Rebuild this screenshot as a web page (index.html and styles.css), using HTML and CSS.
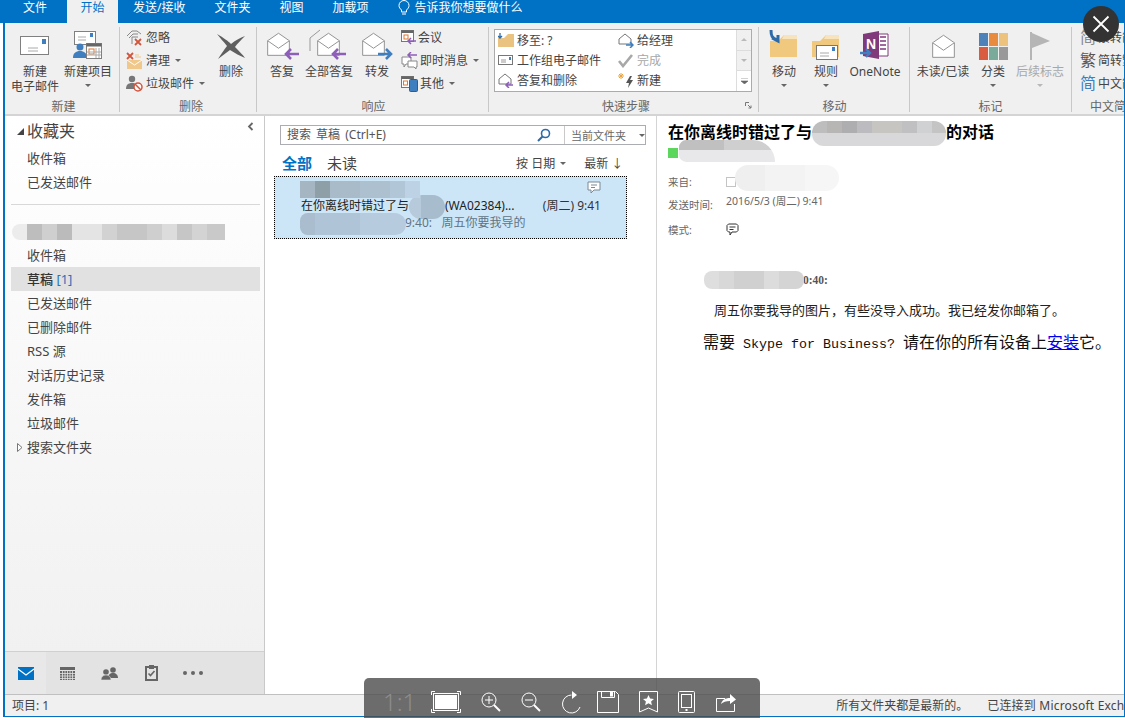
FILE: index.html
```html
<!DOCTYPE html>
<html lang="zh-CN">
<head>
<meta charset="utf-8">
<title>Outlook</title>
<link rel="stylesheet" href="styles.css">
</head>
<body>
<svg class="defs" width="0" height="0">
  <defs>
    <symbol id="open" viewBox="0 0 30 30"><path d="M2 10.5 15 1.5 28 10.5V28H2Z" fill="#fff" stroke="#808080"/><path d="M2 10.5 15 19.5 28 10.5" fill="#fff" stroke="#808080"/></symbol>
    <symbol id="arrowL" viewBox="0 0 16 12"><path d="M16 6H4M8 1 3 6l5 5" fill="none" stroke="#8d5fb8" stroke-width="2.6"/></symbol>
    <symbol id="arrowR" viewBox="0 0 16 12"><path d="M0 6h12M8 1l5 5-5 5" fill="none" stroke="#3f7fbf" stroke-width="2.6"/></symbol>
    <symbol id="caret" viewBox="0 0 6 3"><path d="M0 0h6L3 3Z" fill="#666"/></symbol>
    <symbol id="folder" viewBox="0 0 28 24"><path d="M0 7 8 7 14 1H27V23H0Z" fill="#f0c97f"/><path d="M14 1h13v4H12Z" fill="#f7e4bc"/></symbol>
  </defs>
</svg>

<header class="tabs">
  <span class="tab t-file">文件</span>
  <span class="tab tab-on">开始</span>
  <span class="tab t-send">发送/接收</span>
  <span class="tab t-folder">文件夹</span>
  <span class="tab t-view">视图</span>
  <span class="tab t-addin">加载项</span>
  <svg class="bulb" width="12" height="16" viewBox="0 0 12 16"><path d="M3.5 10C2 8.500 1 7.500 1 5.500a5 5 0 0 1 10 0c0 2-1 3-2.500 4.500v2h-5ZM4 14h4" fill="none" stroke="#fff"/></svg>
  <span class="tab t-tell">告诉我你想要做什么</span>
</header>

<div class="frame">
  <section class="ribbon">
    <div class="group g1">
      <div class="gbody">
        <div class="big b-new">
          <span class="bigicon"><svg width="30" height="20" viewBox="0 0 30 20"><rect x=".5" y=".5" width="28" height="18" fill="#fff" stroke="#808080"/><rect x="22" y="3" width="4" height="5" fill="#3f7fbf"/><path d="M8 12h10M8 15h10" stroke="#aaa"/></svg></span>
          <span>新建</span><span>电子邮件</span>
        </div>
        <div class="big b-item">
          <span class="bigicon"><svg width="30" height="30" viewBox="0 0 30 30"><rect x="1.500" y=".5" width="21" height="13" fill="#fff" stroke="#808080"/><rect x="17" y="2" width="3" height="4" fill="#3f7fbf"/><path d="M5 6h8M5 9h8" stroke="#aaa"/><circle cx="7" cy="16" r="3.500" fill="#3f7fbf"/><path d="M0 27c0-5 3-7 7-7s7 2 7 7Z" fill="#3f7fbf"/><rect x="13.500" y="12.500" width="15" height="15" fill="#fff" stroke="#808080"/><rect x="13.500" y="12.500" width="15" height="3" fill="#666"/><rect x="16" y="18" width="5" height="5" fill="#fff" stroke="#e0792f"/><path d="M23 17v10M26 17v10M14 21h14M14 24h14" stroke="#aaa"/></svg></span>
          <span>新建项目</span>
          <svg class="caret" width="6" height="3"><use href="#caret"/></svg>
        </div>
      </div>
      <div class="glabel">新建</div>
    </div>

    <div class="group g2">
      <div class="gbody">
        <div class="smallcol c-del">
          <div class="small"><svg width="17" height="17" viewBox="0 0 17 17"><path d="M1 7 6 2h5l4 3M3 9l4-4h5M6 15V8h6" fill="none" stroke="#888"/><path d="M9 10l6 6M15 10l-6 6" stroke="#d2553c" stroke-width="1.800"/></svg><span>忽略</span></div>
          <div class="small"><svg width="17" height="17" viewBox="0 0 17 17"><rect x="1" y="8" width="15" height="9" fill="#efc88a"/><path d="M1 8l7.500 5L16 8" fill="none" stroke="#fff"/><path d="M1 1l6 6M7 1 1 7" stroke="#d2553c" stroke-width="1.800"/><path d="M9 5h6M9 3h4" stroke="#efc88a"/></svg><span>清理</span><svg class="caret-s" width="6" height="3"><use href="#caret"/></svg></div>
          <div class="small"><svg width="17" height="17" viewBox="0 0 17 17"><circle cx="6" cy="4" r="3.200" fill="#777"/><path d="M0 14c0-4 2-6 6-6s5 2 5 3v3Z" fill="#777"/><circle cx="12" cy="12" r="4" fill="#fff" stroke="#d2553c" stroke-width="1.500"/><path d="M9 9l6 6" stroke="#d2553c" stroke-width="1.500"/></svg><span>垃圾邮件</span><svg class="caret-s" width="6" height="3"><use href="#caret"/></svg></div>
        </div>
        <div class="big b-del">
          <span class="bigicon"><svg width="30" height="28" viewBox="0 0 30 28"><path d="M1 2C8 6 12 9 15 12 20 8 24 6 29 4 25 8 21 12 19 15 23 19 27 23 29 26 24 24 19 21 14 18 10 21 6 24 2 27 5 22 8 18 11 14 7 9 4 6 1 2Z" fill="#5f5f5f"/></svg></span>
          <span>删除</span>
        </div>
      </div>
      <div class="glabel">删除</div>
    </div>

    <div class="group g3">
      <div class="gbody">
        <div class="big b-reply">
          <span class="bigicon mail"><svg class="mailsvg" width="27" height="25"><use href="#open"/></svg><svg class="arrow" width="16" height="12"><use href="#arrowL"/></svg></span>
          <span>答复</span>
        </div>
        <div class="big b-all">
          <span class="bigicon mail"><svg class="backsvg" width="28" height="25" viewBox="0 0 28 25"><path d="M1 22V9L11 1" fill="none" stroke="#999"/></svg><svg class="mailsvg" width="27" height="25"><use href="#open"/></svg><svg class="arrow" width="16" height="12"><use href="#arrowL"/></svg></span>
          <span>全部答复</span>
        </div>
        <div class="big b-fwd">
          <span class="bigicon mail"><svg class="mailsvg" width="27" height="25"><use href="#open"/></svg><svg class="arrow" width="16" height="12"><use href="#arrowR"/></svg></span>
          <span>转发</span>
        </div>
        <div class="smallcol c-resp">
          <div class="small"><svg width="15" height="15" viewBox="0 0 15 15"><rect x=".5" y=".5" width="12" height="11" fill="#fff" stroke="#777"/><rect x=".5" y=".5" width="12" height="2.500" fill="#666"/><rect x="3" y="5" width="4" height="4" fill="#fff" stroke="#e0792f"/><path d="M15 11H8M10 8l-3 3 3 3" fill="none" stroke="#8d5fb8" stroke-width="1.500"/></svg><span>会议</span></div>
          <div class="small"><svg width="17" height="17" viewBox="0 0 17 17"><path d="M1 5h9v7H5l-2 3v-3H1Z" fill="#fff" stroke="#888"/><path d="M7 9h9v6h-1v2l-2-2H7Z" fill="#fff" stroke="#888"/><path d="M16 3H8M10 0 7 3l3 3" fill="none" stroke="#8d5fb8" stroke-width="1.500"/></svg><span>即时消息</span><svg class="caret-s" width="6" height="3"><use href="#caret"/></svg></div>
          <div class="small"><svg width="17" height="17" viewBox="0 0 17 17"><rect x=".5" y="1.500" width="12" height="11" fill="#fff" stroke="#777"/><rect x=".5" y="1.500" width="12" height="2.500" fill="#666"/><rect x="2.500" y="6" width="4" height="4" fill="#fff" stroke="#e0792f"/><rect x="8.500" y="4.500" width="8" height="12" rx="1" fill="#3f7fbf" stroke="#555"/></svg><span>其他</span><svg class="caret-s" width="6" height="3"><use href="#caret"/></svg></div>
        </div>
      </div>
      <div class="glabel">响应</div>
    </div>

    <div class="group g4">
      <div class="gbody">
        <div class="gallery">
          <div class="galgrid">
            <div class="gitem"><svg width="16" height="15" viewBox="0 0 16 15"><path d="M0 5h6l4-4h6v13H0Z" fill="#e9c37f"/><path d="M2 0v4M0 3l2 2 2-2" fill="none" stroke="#2d6ba8" stroke-width="1.300"/></svg><span>移至: ?</span></div>
            <div class="gitem"><svg width="16" height="15" viewBox="0 0 16 15"><path d="M1 6 7 1l6 5v5H1Z" fill="#fff" stroke="#777"/><path d="M8 12h7M12 9l3 3-3 3" fill="none" stroke="#3f7fbf" stroke-width="1.500"/></svg><span>给经理</span></div>
            <div class="gitem"><svg width="16" height="15" viewBox="0 0 16 15"><rect x=".5" y="2.500" width="14" height="9" fill="#fff" stroke="#777"/><rect x="11" y="4" width="2" height="3" fill="#3f7fbf"/><path d="M3 7h5M3 9h5" stroke="#999"/></svg><span>工作组电子邮件</span></div>
            <div class="gitem muted"><svg width="16" height="15" viewBox="0 0 16 15"><path d="M1 8l4 5L14 2" fill="none" stroke="#a8a8a8" stroke-width="2.600"/></svg><span>完成</span></div>
            <div class="gitem"><svg width="16" height="15" viewBox="0 0 16 15"><path d="M1 6 7 1l6 5v5H1Z" fill="#fff" stroke="#777"/><path d="M15 12H8M11 9l-3 3 3 3" fill="none" stroke="#8d5fb8" stroke-width="1.500"/></svg><span>答复和删除</span></div>
            <div class="gitem"><svg width="16" height="15" viewBox="0 0 16 15"><path d="M3 0v6M0 3h6M1 1l4 4M5 1 1 5" stroke="#e8a33d"/><path d="M12 3 8 10h3l-1 5 5-8h-3l2-4Z" fill="#555"/></svg><span>新建</span></div>
          </div>
          <div class="galscroll">
            <span class="sb"><svg width="6" height="3"><path d="M0 3h6L3 0Z" fill="#bbb"/></svg></span>
            <span class="sb"><svg width="6" height="3"><use href="#caret" opacity=".4"/></svg></span>
            <span class="sb sb-w"><svg width="7" height="6"><path d="M0 0h7M0 3h7L3.500 6Z" stroke="#666" stroke-width=".6" fill="#666"/></svg></span>
          </div>
        </div>
      </div>
      <div class="glabel">快速步骤</div>
      <svg class="launcher" width="7" height="7" viewBox="0 0 7 7"><path d="M.5 4V.5H4M3 3l3 3M6 3.500V6H3.500" fill="none" stroke="#777"/></svg>
    </div>

    <div class="group g5">
      <div class="gbody">
        <div class="big b-move">
          <span class="bigicon fold"><svg width="28" height="24"><use href="#folder"/></svg><svg class="bluearrow" width="13" height="17" viewBox="0 0 13 17"><path d="M3 1c0 6 1 8 6 10M4 9l6 3 0-6" fill="none" stroke="#2d6ba8" stroke-width="3"/></svg></span>
          <span>移动</span>
          <svg class="caret" width="6" height="3"><use href="#caret"/></svg>
        </div>
        <div class="big b-rule">
          <span class="bigicon fold"><svg width="28" height="24"><use href="#folder"/></svg><svg class="envover" width="22" height="15" viewBox="0 0 22 15"><rect x=".5" y=".5" width="21" height="14" fill="#fff" stroke="#777"/><rect x="16" y="2" width="3" height="4" fill="#3f7fbf"/><path d="M4 8h9M4 11h9" stroke="#aaa"/></svg></span>
          <span>规则</span>
          <svg class="caret" width="6" height="3"><use href="#caret"/></svg>
        </div>
        <div class="big b-one">
          <span class="bigicon"><svg width="30" height="30" viewBox="0 0 30 30"><path d="M18 3h10v22H18Z" fill="#fff" stroke="#80397b"/><path d="M20 6h6M20 10h6M20 14h6M20 18h6" stroke="#80397b" stroke-width="1.500"/><path d="M3 3 19 0V28L3 25Z" fill="#80397b"/><text x="6" y="18" class="onenote-n">N</text><path d="M0 22h9M6 18l4 4-4 4" fill="none" stroke="#3f7fbf" stroke-width="2.400"/></svg></span>
          <span>OneNote</span>
        </div>
      </div>
      <div class="glabel">移动</div>
    </div>

    <div class="group g6">
      <div class="gbody">
        <div class="big b-read">
          <span class="bigicon"><svg width="27" height="25"><use href="#open"/></svg></span>
          <span>未读/已读</span>
        </div>
        <div class="big b-cat">
          <span class="bigicon"><span class="swatch"><i class="s1"></i><i class="s2"></i><i class="s3"></i><i class="s4"></i><i class="s5"></i><i class="s6"></i></span></span>
          <span>分类</span>
          <svg class="caret" width="6" height="3"><use href="#caret"/></svg>
        </div>
        <div class="big b-flag muted">
          <span class="bigicon"><svg width="22" height="30" viewBox="0 0 22 30"><path d="M2 1v28" stroke="#b5b5b5" stroke-width="2"/><path d="M3 2 21 10 3 17Z" fill="#b5b5b5"/></svg></span>
          <span>后续标志</span>
          <svg class="caret caret-faint" width="6" height="3"><use href="#caret"/></svg>
        </div>
      </div>
      <div class="glabel">标记</div>
    </div>

    <div class="group g7">
      <div class="gbody">
        <div class="smallcol c-zh">
          <div class="small"><span class="zh-i">简</span><span>繁转简</span></div>
          <div class="small"><span class="zh-i dark">繁</span><span>简转繁</span></div>
          <div class="small"><span class="zh-i blue">简</span><span>中文简繁转换</span></div>
        </div>
      </div>
      <div class="glabel g7label">中文简繁转换</div>
    </div>
  </section>

  <main class="main">
    <nav class="nav">
      <div class="navscroll">
        <div class="favhead"><svg class="tri" width="7" height="7"><path d="M7 0V7H0Z" fill="#444"/></svg><span>收藏夹</span><svg class="collapse" width="7" height="9" viewBox="0 0 7 9"><path d="M5.500 1 2 4.500 5.500 8" fill="none" stroke="#666" stroke-width="1.800"/></svg></div>
        <div class="navitem">收件箱</div>
        <div class="navitem">已发送邮件</div>
        <div class="navdiv"></div>
        <div class="accrow"><span class="blur b-acc"></span></div>
        <div class="navitem">收件箱</div>
        <div class="navitem on"><b>草稿</b> <span class="count">[1]</span></div>
        <div class="navitem">已发送邮件</div>
        <div class="navitem">已删除邮件</div>
        <div class="navitem">RSS 源</div>
        <div class="navitem">对话历史记录</div>
        <div class="navitem">发件箱</div>
        <div class="navitem">垃圾邮件</div>
        <div class="navitem expand"><svg class="tri2" width="6" height="9"><path d="M.5.5 5 4.500.5 8.500Z" fill="#fff" stroke="#777"/></svg>搜索文件夹</div>
      </div>
      <div class="modes">
        <span class="mode mode-on"><svg width="16" height="13" viewBox="0 0 16 13"><rect width="16" height="13" fill="#0072c6"/><path d="M0 2l8 6 8-6" fill="none" stroke="#fff" stroke-width="1.200"/></svg></span>
        <span class="mode"><svg width="15" height="13" viewBox="0 0 15 13"><rect width="15" height="3" fill="#666"/><path d="M0 4h15v9H0Z" fill="#666"/><path d="M0 6.500h15M0 9h15M0 11.500h15M2.500 4v9M5 4v9M7.500 4v9M10 4v9M12.500 4v9" stroke="#e3e3e3" stroke-width=".8"/></svg></span>
        <span class="mode"><svg width="17" height="13" viewBox="0 0 17 13"><circle cx="12" cy="3" r="2.800" fill="#666"/><path d="M7 11c0-3 2-5 5-5s5 2 5 5Z" fill="#666"/><circle cx="5" cy="5" r="2.800" fill="#666"/><path d="M0 13c0-3 2-5 5-5s5 2 5 5Z" fill="#666" stroke="#e3e3e3" stroke-width=".6"/></svg></span>
        <span class="mode"><svg width="13" height="16" viewBox="0 0 13 16"><path d="M1 2h11v13H1Z" fill="none" stroke="#666" stroke-width="2"/><rect x="4" y="0" width="5" height="4" fill="#666"/><path d="M3.500 8.500l2 2 4-4.500" fill="none" stroke="#666" stroke-width="1.600"/></svg></span>
        <span class="mode dots"><i></i><i></i><i></i></span>
      </div>
    </nav>

    <section class="list">
      <div class="search">
        <span class="stext">搜索 草稿 (Ctrl+E)</span>
        <svg class="mag" width="14" height="14" viewBox="0 0 14 14"><circle cx="8.500" cy="5.500" r="4" fill="none" stroke="#2d6ba8" stroke-width="1.600"/><path d="M5.500 8.500 1 13" stroke="#2d6ba8" stroke-width="2"/></svg>
        <span class="scope">当前文件夹<svg width="6" height="3"><use href="#caret"/></svg></span>
      </div>
      <div class="filters">
        <span class="f-all">全部</span><span class="f-unread">未读</span>
        <span class="f-by">按 日期<svg width="6" height="3"><use href="#caret"/></svg></span>
        <span class="f-new">最新 ↓</span>
      </div>
      <article class="msg">
        <div class="msgtop"><span class="blur b-from"></span><svg width="14" height="13" viewBox="0 0 14 13"><path d="M1 1h12v8H7l-3 3V9H1Z" fill="#fff" stroke="#7a8a96"/><path d="M4 4h6M4 6.500h4" stroke="#7a8a96"/></svg></div>
        <div class="msgmid"><span class="subject">在你离线时错过了与<span class="blur b-subj"></span>(WA02384)...</span><span>(周二) 9:41</span></div>
        <div class="msgbot"><span class="blur b-prev"></span><span class="prev">9:40: &nbsp;&nbsp;周五你要我导的</span></div>
      </article>
    </section>

    <section class="read">
      <h1 class="rtitle">在你离线时错过了与<span class="blur b-title"></span>的对话</h1>
      <div class="presence"><i class="dot"></i><span class="blur b-pres"></span></div>
      <div class="meta"><span class="mk">来自:</span><span class="mv"><i class="check"></i><span class="blur b-sender"></span></span></div>
      <div class="meta meta-date"><span class="mk">发送时间:</span><span class="mv date">2016/5/3 (周二) 9:41</span></div>
      <div class="meta meta-mode"><span class="mk">模式:</span><span class="mv"><svg width="13" height="13" viewBox="0 0 13 13"><path d="M1 2.500 2.500 1h8L12 2.500v5L10.500 9H6L4 12V9H2.500L1 7.500Z" fill="#fff" stroke="#333"/><path d="M3.500 4h6M3.500 6.500h4" stroke="#333"/></svg></span></div>
      <div class="bodyhead"><span class="blur b-body"></span><b>0:40:</b></div>
      <p class="bodytext">周五你要我导的图片，有些没导入成功。我已经发你邮箱了。</p>
      <p class="skype">需要<span class="mono"> Skype for Business? </span>请在你的所有设备上<a href="#">安装</a>它。</p>
    </section>
  </main>

  <footer class="status">
    <span>项目: 1</span>
    <span class="st-right">所有文件夹都是最新的。</span>
    <span class="st-conn">已连接到 Microsoft Exchange</span>
  </footer>
</div>

<button class="close" aria-label="关闭"><svg width="18" height="18" viewBox="0 0 18 18"><path d="M1.500 1.500l15 15M16.500 1.500l-15 15" stroke="#fff" stroke-width="1.800"/></svg></button>

<div class="viewer">
  <span class="ratio">1:1</span>
  <svg width="30" height="22" viewBox="0 0 30 22"><path d="M.5 4V.5H4M26 .5h3.500V4M.5 18v3.500H4M26 21.500h3.500V18" fill="none" stroke="#fff"/><rect x="3.500" y="3.500" width="23" height="15" fill="#fff" stroke="#6d6d6d"/><rect x="2.500" y="2.500" width="25" height="17" fill="none" stroke="#fff"/></svg>
  <svg width="20" height="21" viewBox="0 0 20 21"><circle cx="8" cy="8" r="7" fill="none" stroke="#fff"/><path d="M4 8h8M8 4v8" stroke="#fff"/><path d="M13 13l6 6" stroke="#fff" stroke-width="2"/></svg>
  <svg width="20" height="21" viewBox="0 0 20 21"><circle cx="8" cy="8" r="7" fill="none" stroke="#fff"/><path d="M4 8h8" stroke="#fff"/><path d="M13 13l6 6" stroke="#fff" stroke-width="2"/></svg>
  <svg width="20" height="23" viewBox="0 0 20 23"><path d="M10.500 4A9 9 0 1 0 19 16" fill="none" stroke="#fff"/><path d="M11 0l5 4-5 4Z" fill="#fff"/></svg>
  <svg class="v-save" width="22" height="22" viewBox="0 0 22 22"><path d="M.5.5h18l3 3v18H.5Z" fill="none" stroke="#fff"/><path d="M4.500.5v6h13v-6" fill="none" stroke="#fff"/><rect x="13" y="1" width="3" height="4.500" fill="#fff"/></svg>
  <svg width="19" height="22" viewBox="0 0 19 22"><path d="M.5.5h18v20.500l-9-4-9 4Z" fill="none" stroke="#fff"/><path d="M9.500 4l1.600 3.500 3.900.4-2.900 2.500.8 3.800-3.400-2-3.400 2 .8-3.800L4 7.900l3.900-.4Z" fill="#fff"/></svg>
  <svg width="17" height="22" viewBox="0 0 17 22"><rect x=".5" y=".5" width="16" height="21" rx="1" fill="none" stroke="#fff"/><rect x="3.500" y="3.500" width="10" height="13" fill="none" stroke="#fff"/><rect x="7.500" y="18" width="2" height="2" fill="#fff"/></svg>
  <svg class="v-share" width="20" height="19" viewBox="0 0 20 19"><path d="M9 5.500H.5v13h18V11" fill="none" stroke="#fff"/><path d="M5 11c1-4 4-6 9-6V1l6 5.500L14 11V8c-4 0-7 1-9 3Z" fill="#fff"/></svg>
</div>
</body>
</html>
```
FILE: styles.css
```css
* { box-sizing: border-box; }
html, body { margin: 0; height: 100%; overflow: hidden; }
body {
  width: 1125px;
  height: 718px;
  background: #fff;
  position: relative;
  font: 12px/15px "Noto Sans", "Noto Sans CJK SC", sans-serif;
  color: #444;
}
.defs { position: absolute; }

.tabs {
  height: 23px;
  background: #0072c6;
  display: flex;
  color: #fff;
  font-size: 12px;
  line-height: 15px;
  padding-left: 23px;
}
.tab { white-space: nowrap; }
.tab-on {
  margin-left: 20px;
  width: 51px;
  background: #f0f0f0;
  color: #0072c6;
  text-align: center;
}
.t-send { margin-left: 15px; }
.t-folder { margin-left: 29px; }
.t-view { margin-left: 29px; }
.t-addin { margin-left: 29px; }
.bulb { margin-left: 29px; }
.t-tell { margin-left: 5px; }

.frame {
  margin-left: 3px;
  height: 694px;
  border-left: 2px solid #0072c6;
  border-right: 1px solid #0072c6;
  border-bottom: 1px solid #0072c6;
  display: flex;
  flex-direction: column;
}

.ribbon {
  height: 93px;
  flex: none;
  background: #f0f0f0;
  border-bottom: 2px solid #d4d4d4;
  padding-top: 4px;
  display: flex;
  overflow: hidden;
}
.group {
  position: relative;
  height: 85px;
  border-right: 1px solid #c8c8c8;
  display: flex;
  flex-direction: column;
  flex: none;
}
.gbody { flex: 1; display: flex; min-height: 0; }
.glabel { height: 15px; text-align: center; color: #666; line-height: 15px; margin-bottom: -2px; }
.g1 { width: 115px; padding-left: 3px; }
.g2 { width: 137px; padding-left: 6px; }
.g3 { width: 232px; padding-left: 2px; }
.g4 { width: 270px; padding-left: 5px; }
.g5 { width: 151px; padding-left: 1px; }
.g6 { width: 162px; }
.g7 { width: 60px; border-right: 0; white-space: nowrap; }
.g7label { text-align: left; padding-left: 18px; }

.big {
  display: flex;
  flex-direction: column;
  align-items: center;
  color: #444;
  white-space: nowrap;
  flex: none;
  padding-top: 1px;
}
.muted, .muted span { color: #a8a8a8; }
.bigicon {
  height: 36px;
  display: flex;
  align-items: center;
  justify-content: center;
  position: relative;
  flex: none;
}
.caret { margin-top: 5px; }
.caret-faint { opacity: .4; }
.caret-s { margin-left: 5px; }
.b-new { width: 54px; }
.b-item { width: 52px; }
.b-del { width: 50px; margin-left: 1px; }
.b-reply { width: 46px; }
.b-all { width: 48px; }
.b-fwd { width: 48px; }
.b-move { width: 48px; }
.b-rule { width: 36px; }
.b-one { width: 60px; margin-left: 1px; }
.b-read { width: 64px; margin-left: 1px; }
.b-cat { width: 36px; }
.b-flag { width: 58px; }

.mail { width: 34px; justify-content: flex-start; }
.mailsvg { margin-top: -4px; }
.arrow { position: absolute; right: 0; bottom: 4px; }
.backsvg { position: absolute; left: -3px; top: 1px; }
.b-all .mailsvg { margin-left: 3px; }
.fold { width: 30px; }
.bluearrow { position: absolute; left: -1px; top: 1px; }
.envover { position: absolute; left: 5px; top: 17px; }
.onenote-n { font: bold 14px "Liberation Sans", sans-serif; fill: #fff; }

.swatch { display: grid; grid-template-columns: repeat(3, 9px); grid-auto-rows: 13px; gap: 1px; }
.swatch i { display: block; }
.s1 { background: #4d82b8; }
.s2 { background: #e98b3f; }
.s3 { background: #edc27d; }
.s4 { background: #d95c40; }
.s5 { background: #7aab9a; }
.s6 { background: #999; }

.smallcol { display: flex; flex-direction: column; flex: none; }
.small { height: 23px; display: flex; align-items: center; white-space: nowrap; }
.small > svg:first-child { flex: none; margin-right: 3px; }
.c-del { width: 79px; margin-top: -1px; }
.c-resp .small > svg:first-child { margin-right: 2px; }
.c-resp { margin-top: -1px; }
.c-zh { margin-left: 8px; margin-top: -1px; }
.zh-i { width: 18px; font-size: 16px; color: #8a8a8a; flex: none; }
.zh-i.dark { color: #555; }
.zh-i.blue { color: #3f7fbf; }

.gallery {
  width: 258px;
  height: 63px;
  margin-top: 2px;
  background: #fff;
  border: 1px solid #ababab;
  display: flex;
}
.galgrid {
  flex: 1;
  display: grid;
  grid-template-columns: 120px 1fr;
  grid-auto-rows: 20px;
  padding: 0 0 0 3px;
}
.gitem { display: flex; align-items: center; white-space: nowrap; }
.gitem svg { margin-right: 3px; flex: none; }
.galscroll { width: 15px; display: flex; flex-direction: column; background: #f0f0f0; border-left: 1px solid #ddd; }
.sb { flex: 1; display: flex; align-items: center; justify-content: center; border-bottom: 1px solid #ddd; }
.sb-w { background: #fff; border-bottom: 0; }
.launcher { position: absolute; right: 6px; bottom: 3px; }

.main { flex: 1; display: flex; min-height: 0; background: #fff; }

.nav {
  width: 260px;
  flex: none;
  border-right: 1px solid #c9c9c9;
  background: linear-gradient(#fff, #f0f0f0);
  display: flex;
  flex-direction: column;
  font-size: 13px;
}
.navscroll { flex: 1; padding-left: 6px; padding-right: 4px; }
.favhead {
  height: 30px;
  display: flex;
  align-items: center;
  font-size: 16px;
  position: relative;
  padding-left: 6px;
}
.favhead span { margin-left: 3px; }
.collapse { position: absolute; right: 6px; top: 6px; }
.navitem { height: 24px; line-height: 24px; padding-left: 16px; color: #444; white-space: nowrap; }
.navitem.on { background: #e1e1e1; }
.navitem.on b { font-weight: 500; color: #333; }
.count { color: #2a72b8; }
.expand { position: relative; }
.tri2 { position: absolute; left: 6px; top: 8px; }
.navdiv { height: 1px; background: #d8d8d8; margin-top: 10px; }
.accrow { height: 38px; position: relative; }

.modes {
  height: 43px;
  flex: none;
  background: #e3e3e3;
  border-top: 1px solid #d0d0d0;
  display: flex;
  align-items: stretch;
}
.mode { width: 42px; display: flex; align-items: center; justify-content: center; }
.mode-on { width: 41px; background: #e8e8e8; }
.dots { gap: 4px; }
.dots i { width: 4px; height: 4px; border-radius: 50%; background: #666; }

.list { width: 392px; flex: none; border-right: 1px solid #d4d4d4; padding-top: 9px; position: relative; }
.search {
  height: 20px;
  margin-left: 15px;
  width: 366px;
  border: 1px solid #abadb3;
  display: flex;
  align-items: center;
  padding-left: 6px;
  color: #555;
  background: #fff;
}
.stext { flex: 1; word-spacing: 2px; padding-bottom: 1px; }
.mag { margin-right: 13px; }
.scope { width: 81px; height: 18px; border-left: 1px solid #c9c9c9; padding-left: 6px; display: flex; align-items: center; color: #666; font-size: 11px; gap: 13px; white-space: nowrap; }
.filters { height: 31px; padding-top: 5px; margin-left: 17px; display: flex; align-items: center; font-size: 12px; }
.f-all { color: #0072c6; font-weight: 700; font-size: 15px; }
.f-unread { margin-left: 15px; font-size: 15px; }
.f-by { margin-left: 159px; display: flex; align-items: center; gap: 5px; }
.f-new { margin-left: 18px; }

.msg {
  margin-left: 9px;
  width: 353px;
  height: 63px;
  background: #cde6f7;
  border: 1px dotted #000;
  padding: 4px 25px 0 26px;
  color: #333;
  position: relative;
}
.msgtop { height: 17px; display: flex; justify-content: flex-end; }
.msgmid { height: 15px; display: flex; justify-content: space-between; align-items: center; font-size: 12px; white-space: nowrap; }
.subject { color: #222; }
.msgbot { height: 18px; display: flex; align-items: center; position: relative; color: #5f7486; }
.prev { margin-left: 104px; white-space: nowrap; }

.blur { display: inline-block; }
.b-from {
  position: absolute; left: 25px; top: 4px; width: 120px; height: 17px;
  background: linear-gradient(90deg, #a5b5c2 0 15px, #8f9fa8 15px 30px, #a9bac8 30px 60px, #adc0cf 60px 90px, #b1c6d6 90px 105px, #bdd2e4 105px 120px);
}
.b-subj {
  width: 36px; height: 24px; margin: -8px 0; vertical-align: middle; border-radius: 12px;
  background: linear-gradient(90deg, #b6cadb 0 12px, #a7bccd 12px 36px);
}
.b-prev {
  position: absolute; left: -1px; top: 0; width: 106px; height: 22px; border-radius: 8px 12px 11px 8px;
  background: linear-gradient(90deg, #a9bdcf 0 15px, #afc4d6 15px 60px, #b6cbdd 60px 106px);
}
.b-acc {
  position: absolute; left: 1px; top: 19px; width: 213px; height: 16px; border-radius: 8px 0 0 8px;
  background: linear-gradient(90deg, #ececec 0 15px, #bdbdbd 15px 30px, #cfcfcf 30px 45px, #bbb 45px 60px, #e4e4e4 60px 90px, #d2d2d2 90px 105px, #c6c6c6 105px 135px, #cfcfcf 135px 150px, #dcdcdc 150px 165px, #c6c6c6 165px 180px, #d3d3d3 180px 195px, #c9c9c9 195px 213px);
}
.b-title {
  width: 134px; height: 25px; margin: -6px 0; vertical-align: middle; border-radius: 12px;
  background: linear-gradient(#0000 0 12px, #d8d8da 12px), linear-gradient(90deg, #bdbdbd 0 15px, #b8b6b4 15px 30px, #aeaeb0 30px 45px, #bcbcc0 45px 60px, #c7c5c2 60px 90px, #c0c0c2 90px 105px, #d0d1d3 105px 120px, #c4c4c4 120px 134px);
}
.b-pres {
  position: absolute; left: 11px; top: -6px; width: 96px; height: 22px; border-radius: 10px 30px 0 10px;
  background: linear-gradient(#0000 0 10px, #e8e8ea 10px), linear-gradient(90deg, #c0c0c0 0 45px, #cfcfcf 45px 96px);
}
.b-sender {
  position: absolute; left: 9px; top: -10px; width: 104px; height: 26px; border-radius: 14px;
  background: linear-gradient(90deg, #efefef 0 30px, #f2f3f2 30px 70px, #f6f6f6 70px 104px);
}
.b-body {
  position: absolute; left: 0; top: 0; width: 100px; height: 18px; border-radius: 8px;
  background: linear-gradient(90deg, #dedede 0 15px, #d8d8d8 15px 30px, #d0d0d0 30px 60px, #dcdcdc 60px 75px, #d4d4d4 75px 100px);
}

.read { flex: 1; min-width: 0; padding: 4px 0 0 11px; position: relative; white-space: nowrap; overflow: hidden; color: #666; }
.rtitle { margin: 0; font-size: 16px; line-height: 24px; font-weight: 700; color: #000; }
.presence { height: 14px; position: relative; margin-top: 2px; display: flex; align-items: center; }
.dot { width: 10px; height: 10px; background: #5dd65d; }
.meta { display: flex; font-size: 10.500px; line-height: 15px; height: 15px; }
.mk { width: 58px; color: #666; }
.mv { position: relative; }
.presence + .meta { margin-top: 15px; }
.check { display: block; width: 10px; height: 10px; border: 1px solid #c4c4c4; margin-top: 2px; }
.meta-date { margin-top: 8px; }
.date { color: #666; margin-top: -4px; }
.meta-mode { margin-top: 10px; }
.bodyhead { position: relative; margin: 33px 0 0 36px; height: 18px; font: 700 11.500px/18px "Liberation Serif", serif; color: #555; padding-left: 99px; }
.bodytext { margin: 11px 0 0 46px; font-size: 13px; line-height: 20px; color: #222; }
.skype { margin: 11px 0 0 35px; font-size: 16px; line-height: 22px; color: #111; }
.mono { font: 13.330px "Liberation Mono", monospace; white-space: pre; }
.skype a { color: #0000ee; }

.status {
  height: 22px;
  flex: none;
  background: #f0f0f0;
  border-top: 1px solid #c0c0c0;
  display: flex;
  align-items: center;
  padding-left: 7px;
  white-space: nowrap;
  overflow: hidden;
  color: #444;
}
.st-right { margin-left: 787px; }
.st-conn { margin-left: 19px; letter-spacing: .2px; }

.close {
  position: absolute;
  left: 1083px;
  top: 6px;
  width: 36px;
  height: 36px;
  padding: 0;
  border: 0;
  border-radius: 50%;
  background: #333;
  display: flex;
  align-items: center;
  justify-content: center;
}

.viewer {
  position: absolute;
  left: 364px;
  top: 678px;
  width: 396px;
  height: 40px;
  border-radius: 5px 5px 0 0;
  background: rgba(75, 75, 75, .8);
  display: flex;
  align-items: center;
  gap: 20px;
  padding: 8px 0 0 19px;
}
.ratio { font: 300 24px/24px "Noto Sans", sans-serif; color: #8d8d8d; width: 27px; margin-right: 1px; white-space: nowrap; }
.v-save { margin-left: -4px; }
.v-share { margin-left: 1px; }
```
